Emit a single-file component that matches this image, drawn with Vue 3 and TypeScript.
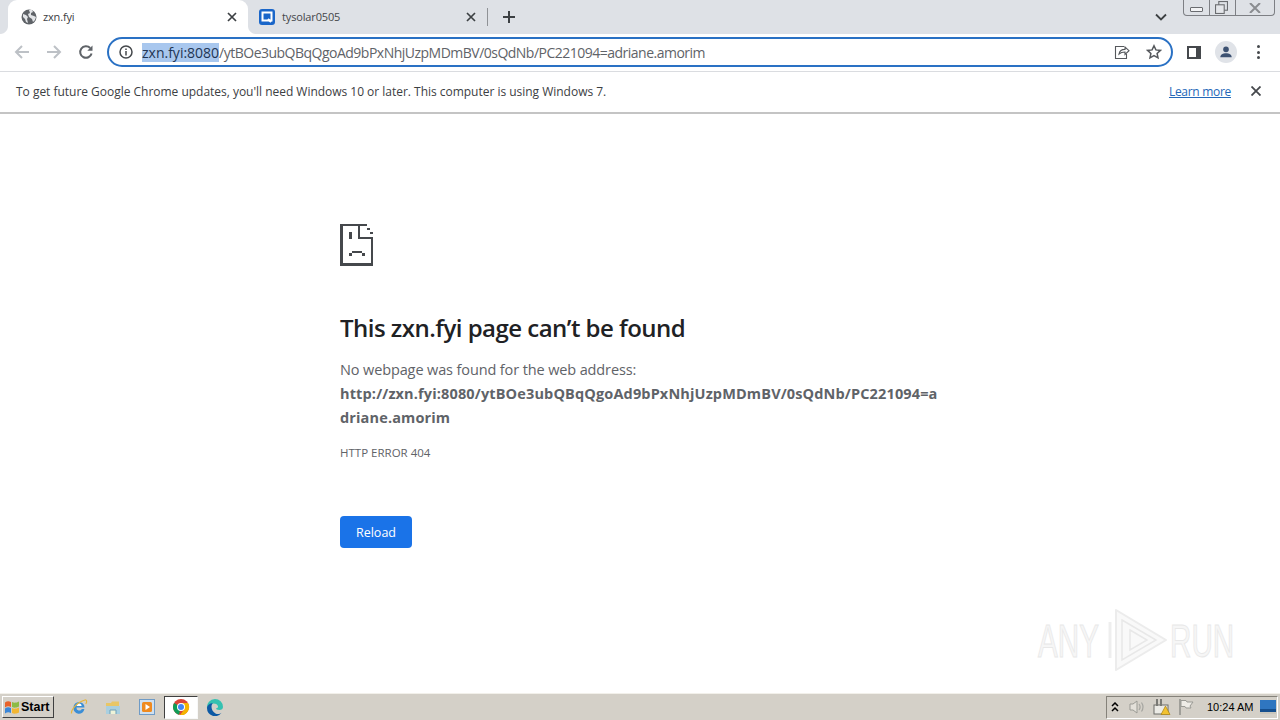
<script setup lang="ts">
/* Chrome-Fenster mit 404-Fehlerseite auf Windows-7-Classic-Taskleiste */
const urlHost = 'zxn.fyi:8080'
const urlRest = '/ytBOe3ubQBqQgoAd9bPxNhjUzpMDmBV/0sQdNb/PC221094=adriane.amorim'
</script>

<template>
  <div class="window">
    <!-- Tabs -->
    <header class="tabstrip">
      <div class="tab tab--active">
        <svg class="favicon" viewBox="0 0 16 16">
          <circle cx="8" cy="8" r="7.5" fill="#5f6368" />
          <path d="M2 5l3 1 2 2-1 2 1 4-2-1-1-3-2-2zM8 1l3 0 1 2-2 1 0 2 3 1 2 1-1 3-2 2-1-3-3-2-1-3 2-1z" fill="#e3e5e8" />
        </svg>
        <span class="tab__title">zxn.fyi</span>
        <svg class="tab__close" viewBox="0 0 10 10"><path d="M1 1l8 8M9 1l-8 8" /></svg>
      </div>
      <div class="tab">
        <svg class="favicon" viewBox="0 0 16 16">
          <rect width="16" height="16" rx="3" fill="#1a66c9" />
          <rect x="3.5" y="3.5" width="9" height="8" fill="none" stroke="#fff" stroke-width="2" />
          <path d="M9 10l3 3" stroke="#fff" stroke-width="2" />
        </svg>
        <span class="tab__title">tysolar0505</span>
        <svg class="tab__close" viewBox="0 0 10 10"><path d="M1 1l8 8M9 1l-8 8" /></svg>
      </div>
      <span class="tab-sep"></span>
      <svg class="new-tab" viewBox="0 0 12 12"><path d="M6 0v12M0 6h12" /></svg>
      <svg class="tab-search" viewBox="0 0 12 8"><path d="M1 1.5l5 5 5-5" /></svg>
      <div class="win-controls">
        <span class="win-btn win-btn--min"><i></i></span>
        <span class="win-btn win-btn--max">
          <svg viewBox="0 0 12 12"><rect x="3.5" y="0.5" width="8" height="8" /><rect x="0.5" y="3.5" width="8" height="8" fill="#e4e6ea" /></svg>
        </span>
        <span class="win-btn win-btn--close">
          <svg viewBox="0 0 12 10"><path d="M1 0l10 10M11 0L1 10" /></svg>
        </span>
      </div>
    </header>

    <!-- Adressleiste -->
    <nav class="toolbar">
      <svg class="nav-icon nav-icon--off" viewBox="0 0 16 16"><path d="M15 8H2M8 2L2 8l6 6" /></svg>
      <svg class="nav-icon nav-icon--off" viewBox="0 0 16 16"><path d="M1 8h13M8 2l6 6-6 6" /></svg>
      <svg class="nav-icon" viewBox="0 0 16 16">
        <path d="M13.6 9.5A5.8 5.8 0 1 1 12.2 4" />
        <path class="fill" d="M14.5 1.5v5.2H9.3z" />
      </svg>
      <div class="omnibox">
        <svg class="info" viewBox="0 0 14 14">
          <circle cx="7" cy="7" r="6" />
          <path d="M7 6v4.4M7 3.4v1.5" />
        </svg>
        <span class="url"><span class="url__sel">{{ urlHost }}</span><span class="url__rest">{{ urlRest }}</span></span>
        <svg class="omni-icon omni-icon--share" viewBox="0 0 16 16">
          <path d="M10 2.5H1.5V14.5h11V10" />
          <path d="M5 10c.6-3 2.9-4.6 6-4.6V3l4 3.7-4 3.7V8C8.6 8 6.5 8.6 5 10z" fill="#fff" />
        </svg>
        <svg class="omni-icon" viewBox="0 0 16 16">
          <path d="M8 1.8l1.9 4.1 4.5.5-3.3 3 .9 4.4L8 11.6l-4 2.200.9-4.400-3.300-3 4.500-.5z" />
        </svg>
      </div>
      <span class="side-panel"><i></i></span>
      <span class="avatar">
        <svg viewBox="0 0 16 16"><circle cx="8" cy="5" r="3.2" /><path d="M1.5 14c0-3 3-4.5 6.500-4.500s6.500 1.500 6.500 4.500z" /></svg>
      </span>
      <span class="menu-dots"><i></i><i></i><i></i></span>
    </nav>

    <!-- Hinweisleiste -->
    <section class="infobar">
      <span class="infobar__text">To get future Google Chrome updates, you'll need Windows 10 or later. This computer is using Windows 7.</span>
      <a class="infobar__link">Learn more</a>
      <svg class="infobar__close" viewBox="0 0 10 10"><path d="M0.5 0.5l9 9M9.5 0.5l-9 9" /></svg>
    </section>

    <!-- Fehlerseite -->
    <main class="page">
      <div class="error">
        <svg class="error__icon" viewBox="0 0 33 42" shape-rendering="crispEdges">
          <path d="M0 0h27v2H3v37h28V13h2v29H0z" />
          <path d="M18 2h2v11h13v2H18zM27 4h3v2h-3zM30 8h3v2h-3z" />
          <path d="M9 8h3v7H9zM12 27h10v2H12zM9 29h3v3H9zM22 29h3v3h-3z" />
        </svg>
        <h1>This zxn.fyi page can’t be found</h1>
        <p class="error__lead">No webpage was found for the web address:</p>
        <p class="error__url">http://zxn.fyi:8080/ytBOe3ubQBqQgoAd9bPxNhjUzpMDmBV/0sQdNb/PC221094=adriane.amorim</p>
        <p class="error__code">HTTP ERROR 404</p>
        <button class="reload" type="button">Reload</button>
      </div>

      <!-- Wasserzeichen -->
      <div class="watermark">
        <span class="watermark__word"><span>ANY</span></span>
        <svg viewBox="0 0 60 64">
          <path d="M8 2L58 32 8 62z" fill="#f9f9f9" stroke="#ececec" stroke-width="2" stroke-linejoin="round" />
          <path d="M14 12l34 20-34 20zM22 22l17 10-17 10z" fill="none" stroke="#e8e8e8" stroke-width="1.5" />
          <path d="M2 14v36" stroke="#eeeeee" stroke-width="3" />
        </svg>
        <span class="watermark__word"><span>RUN</span></span>
      </div>
    </main>

    <!-- Taskleiste -->
    <footer class="taskbar">
      <button class="start" type="button">
        <svg viewBox="0 0 16 16">
          <path d="M1 3.500c2-1.500 4-1.500 6-.5v5C5 7 3 7 1 8.500z" fill="#e8622a" />
          <path d="M8 3c2 1 4 1 7-.5v5C12 9 10 9 8 8z" fill="#8dbb45" />
          <path d="M1 9.500c2-1.500 4-1.500 6-.5v5c-2-1-4-1-6 .5z" fill="#3a86d8" />
          <path d="M8 9c2 1 4 1 7-.5v5c-3 1.500-5 1.500-7 .5z" fill="#f2b632" />
        </svg>
        Start
      </button>
      <div class="quick">
        <span class="quick__item">
          <svg viewBox="0 0 18 18">
            <path d="M3.500 9.500a5.500 5.500 0 0 1 11 0H6.500a2.800 2.800 0 0 0 5.300 1.500h2.600a5.500 5.500 0 0 1-10.900-1.500z" fill="#3b8ed6" />
            <path d="M6.600 8h5a2.500 2.500 0 0 0-5 0z" fill="#fff" />
            <path d="M1.500 15.500C1 12 7 4 15 2c2-.5 2 2 .8 4" fill="none" stroke="#e6b53c" stroke-width="1.2" />
          </svg>
        </span>
        <span class="quick__item">
          <svg viewBox="0 0 18 18">
            <path d="M2 5h5l1-1.500h7V15H2z" fill="#e8c667" />
            <path d="M2 8h14v8H2z" fill="#a9cfe0" />
            <path d="M6 16v-4h6v4" fill="#eef3d8" stroke="#6ea0b8" />
          </svg>
        </span>
        <span class="quick__item">
          <svg viewBox="0 0 18 18">
            <rect x="1.5" y="1.5" width="15" height="15" fill="#cfe0f0" stroke="#6f9bc6" />
            <rect x="4" y="4" width="10" height="10" rx="1.5" fill="#ef8a1f" />
            <path d="M7.500 6v6l4.500-3z" fill="#fff" />
          </svg>
        </span>
        <span class="quick__item quick__item--active">
          <svg viewBox="0 0 18 18">
            <circle cx="9" cy="9" r="8" fill="#db4437" />
            <path d="M9 9L2.100 5A8 8 0 0 0 7 16.800z" fill="#0f9d58" />
            <path d="M9 5h7a8 8 0 0 1-7.900 12L12.500 11z" fill="#f4b400" />
            <circle cx="9" cy="9" r="4" fill="#fff" />
            <circle cx="9" cy="9" r="3" fill="#4285f4" />
          </svg>
        </span>
        <span class="quick__item">
          <svg viewBox="0 0 18 18">
            <path d="M9 1a8 8 0 0 1 8 8c0 2-1.500 3-3.500 3-2.500 0-3.500-.8-3.500-1.700 1.700-.2 2.500-1.200 1.800-2.600C10.800 5.700 8 4.800 5 6 3 7 1.500 8.500 1 10a8 8 0 0 1 8-9z" fill="#35c1b1" />
            <path d="M1 10c.2-3 3.500-5 6-4.700C4.500 7 5 13 9.500 15.500c2 1 4.500.6 6-.8A8 8 0 0 1 1 10z" fill="#0c59a4" />
          </svg>
        </span>
      </div>
      <div class="tray">
        <svg class="tray__icon tray__icon--chev" viewBox="0 0 8 10"><path d="M1 4l3-3 3 3M1 9l3-3 3 3" /></svg>
        <svg class="tray__icon tray__icon--speaker" viewBox="0 0 18 16">
          <path d="M2 5h3l4-3v12l-4-3H2z" fill="#e4e1da" stroke="#9b9b95" />
          <path d="M11 5c1.500 2 1.500 4 0 6M13.500 3.500c2 3 2 6 0 9" fill="none" stroke="#a5a5a0" stroke-width="1.2" />
        </svg>
        <svg class="tray__icon tray__icon--net" viewBox="0 0 18 18">
          <rect x="1" y="7" width="14" height="9" fill="#ecebe6" stroke="#6d6d68" />
          <path d="M4 1v7M8 1v7" stroke="#7a7a75" stroke-width="2" />
          <path d="M12.500 8l4.500 8.500H8z" fill="#f2c230" stroke="#a77f10" stroke-width=".7" />
        </svg>
        <svg class="tray__icon tray__icon--flag" viewBox="0 0 18 18">
          <path d="M3 1v16" stroke="#8f8f8a" stroke-width="1.5" />
          <path d="M4 2.500h5l1 1.500h6l-3 4 1 2H9L8 8.500H4z" fill="#eeece6" stroke="#9a9a94" />
        </svg>
        <span class="tray__clock">10:24 AM</span>
        <svg class="tray__icon tray__icon--desk" viewBox="0 0 16 14">
          <rect width="16" height="12" fill="#2f76c0" />
          <rect y="9" width="16" height="3" fill="#164f8e" />
          <rect y="12" width="16" height="2" fill="#c9c6bd" />
        </svg>
      </div>
    </footer>
  </div>
</template>

<style>
html,
body {
  margin: 0;
  background: #fff;
}
</style>

<style scoped>
.window {
  width: 1280px;
  height: 720px;
  display: flex;
  flex-direction: column;
  overflow: hidden;
  font-family: "Open Sans", "Noto Sans", sans-serif;
  color: #202124;
}

/* ---------- Tabs ---------- */
.tabstrip {
  height: 34px;
  flex: none;
  display: flex;
  align-items: flex-end;
  padding-left: 8px;
  background: #dee1e6;
}
.tab {
  width: 239px;
  height: 28px;
  padding: 0 11px 6px 11px;
  box-sizing: border-box;
  display: flex;
  align-items: center;
  font-size: 11px;
  letter-spacing: -0.15px;
  color: #45474a;
}
.tab--active {
  position: relative;
  width: 240px;
  height: 34px;
  padding: 0 11px 0 13px;
  background: #fff;
  border-radius: 9px 9px 0 0;
  color: #3c4043;
}
/* ausgestellte Ecken unten am aktiven Tab */
.tab--active::before,
.tab--active::after {
  content: "";
  position: absolute;
  bottom: 0;
  width: 8px;
  height: 8px;
}
.tab--active::before {
  left: -8px;
  background: radial-gradient(circle at 0 0, #dee1e6 7.5px, #fff 8.5px);
}
.tab--active::after {
  right: -8px;
  background: radial-gradient(circle at 100% 0, #dee1e6 7.5px, #fff 8.5px);
}
.favicon {
  width: 16px;
  height: 16px;
  flex: none;
  margin-right: 7px;
}
.tab--active .favicon {
  margin-right: 6px;
}
.tab__title {
  flex: 1;
  margin-top: -1px;
}
.tab__close {
  width: 10px;
  height: 10px;
  flex: none;
  fill: none;
  stroke: #3c4043;
  stroke-width: 1.7;
}
.tab-sep {
  width: 1px;
  height: 18px;
  margin-bottom: 8px;
  background: #8f9296;
}
.new-tab {
  width: 12px;
  height: 12px;
  margin: 0 0 11px 15px;
  fill: none;
  stroke: #3c4043;
  stroke-width: 2;
}
.tab-search {
  width: 12px;
  height: 8px;
  margin: 0 0 13px auto;
  fill: none;
  stroke: #3c4043;
  stroke-width: 1.8;
}
.win-controls {
  align-self: flex-start;
  display: flex;
  width: 92px;
  height: 16px;
  margin: 0 5px 0 16px;
  box-sizing: border-box;
  border: 1px solid #7d7f84;
  border-top: none;
  border-radius: 0 0 4px 4px;
}
.win-btn {
  display: flex;
  align-items: center;
  justify-content: center;
  flex: none;
  width: 25px;
  border-right: 1px solid #7d7f84;
}
.win-btn--close {
  flex: 1;
  border-right: none;
}
.win-btn--min i {
  width: 11px;
  height: 3px;
  margin-top: 4px;
  border: 1px solid #6a6c70;
  border-radius: 1px;
  background: #f2f3f5;
}
.win-btn svg {
  width: 12px;
  height: 12px;
  fill: none;
  stroke: #6a6c70;
}
.win-btn--max svg {
  width: 13px;
  height: 13px;
  margin-left: -2px;
}
.win-btn--close svg {
  height: 10px;
  stroke-width: 2;
  stroke: #8a8c90;
}

/* ---------- Adressleiste ---------- */
.toolbar {
  height: 38px;
  flex: none;
  box-sizing: border-box;
  display: flex;
  align-items: center;
  padding: 0 12px 1px 14px;
  background: #fff;
  border-bottom: 1px solid #dadce0;
}
.nav-icon {
  width: 16px;
  height: 16px;
  flex: none;
  margin-right: 16px;
  fill: none;
  stroke: #5f6368;
  stroke-width: 2;
}
.nav-icon--off {
  stroke: #bdc1c6;
}
.nav-icon .fill {
  fill: #5f6368;
  stroke: none;
}
.omnibox {
  width: 1066px;
  height: 30px;
  flex: none;
  margin-left: -3px;
  box-sizing: border-box;
  display: flex;
  align-items: center;
  padding: 0 9px 0 10px;
  border: 2px solid #2a71c4;
  border-radius: 15px;
}
.info {
  width: 14px;
  height: 14px;
  flex: none;
  fill: none;
  stroke: #45484c;
  stroke-width: 1.5;
}
.url {
  flex: 1;
  margin-left: 9px;
  font-size: 14px;
  line-height: 19px;
  white-space: nowrap;
  color: #5f6368;
}
.url__sel {
  letter-spacing: 0;
  background: #a8c7ee;
  color: #1f3554;
}
.url__rest {
  letter-spacing: -0.51px;
}
.omni-icon {
  width: 16px;
  height: 16px;
  flex: none;
  margin-left: 16px;
  fill: none;
  stroke: #55585c;
  stroke-width: 1.5;
}
.omni-icon--share {
  stroke-width: 1.1;
}
.side-panel {
  width: 14px;
  height: 13px;
  flex: none;
  margin-left: 14px;
  box-sizing: border-box;
  display: flex;
  justify-content: flex-start;
  border: 2px solid #45484c;
  background: #45484c;
}
.side-panel i {
  width: 7px;
  background: #fff;
}
.avatar {
  width: 22px;
  height: 22px;
  flex: none;
  margin-left: 14px;
  display: flex;
  align-items: center;
  justify-content: center;
  border-radius: 50%;
  background: #e0e3e8;
}
.avatar svg {
  width: 14px;
  height: 14px;
  fill: #3d5272;
}
.menu-dots {
  flex: none;
  margin-left: 20px;
  display: flex;
  flex-direction: column;
  gap: 2.5px;
}
.menu-dots i {
  width: 3px;
  height: 3px;
  border-radius: 50%;
  background: #45484c;
}

/* ---------- Hinweisleiste ---------- */
.infobar {
  height: 42px;
  flex: none;
  box-sizing: border-box;
  display: flex;
  align-items: center;
  padding: 0 19px 2px 16px;
  font-size: 12px;
  letter-spacing: -0.02px;
  color: #3c4043;
  background: #fff;
  border-bottom: 2px solid #c4c4c4;
}
.infobar__text {
  flex: 1;
}
.infobar__link {
  letter-spacing: -0.3px;
  color: #2467b8;
  text-decoration: underline;
}
.infobar__close {
  width: 10px;
  height: 10px;
  margin-left: 20px;
  fill: none;
  stroke: #45484c;
  stroke-width: 1.8;
}

/* ---------- Fehlerseite ---------- */
.page {
  flex: 1;
  position: relative;
  padding: 110px 0 0 340px;
  background: #fff;
}
.error {
  width: 600px;
}
.error__icon {
  display: block;
  width: 33px;
  height: 42px;
  fill: #45484c;
}
h1 {
  margin: 46px 0 0;
  font-size: 24px;
  font-weight: 600;
  line-height: 32px;
  letter-spacing: -0.52px;
  color: #202124;
}
.error__lead,
.error__url {
  margin: 0;
  font-size: 14.5px;
  line-height: 24px;
  color: #5f6368;
}
.error__lead {
  margin-top: 14px;
  letter-spacing: -0.12px;
}
.error__url {
  font-weight: 700;
  letter-spacing: 0.14px;
  word-break: break-all;
}
.error__code {
  margin: 15px 0 0;
  font-size: 11.5px;
  line-height: 16px;
  color: #5f6368;
}
.reload {
  display: block;
  width: 72px;
  height: 32px;
  margin-top: 55px;
  padding: 0;
  border: none;
  border-radius: 4px;
  font-family: inherit;
  font-size: 12.5px;
  color: #fff;
  background: #1a73e8;
}
.watermark {
  position: absolute;
  left: 1038px;
  top: 494px;
  display: flex;
  align-items: center;
  gap: 8px;
  font-family: "Liberation Sans", sans-serif;
  font-size: 47px;
  line-height: 1;
  color: #f6f6f6;
  -webkit-text-stroke: 1px #e8e8e8;
}
/* schmale Schrift: gestauchter Text in fester Breite */
.watermark__word {
  width: 62px;
  flex: none;
}
.watermark__word span {
  display: block;
  width: 100px;
  transform: scaleX(0.63);
  transform-origin: left center;
}
.watermark svg {
  width: 60px;
  height: 64px;
  flex: none;
  margin: 0 -6px 0 0;
}

/* ---------- Taskleiste ---------- */
.taskbar {
  height: 27px;
  flex: none;
  box-sizing: border-box;
  display: flex;
  align-items: center;
  padding: 0 2px;
  background: #d4d0c8;
  border-top: 1px solid #f2f0ea;
  box-shadow: 0 -1px 0 #d8d6cf;
}
.start {
  width: 52px;
  height: 22px;
  flex: none;
  box-sizing: border-box;
  display: flex;
  align-items: center;
  gap: 1px;
  padding: 0 0 0 1px;
  border: 1px solid;
  border-color: #fff #404040 #404040 #fff;
  background: #d4d0c8;
  font-family: "Liberation Sans", sans-serif;
  font-size: 12.5px;
  font-weight: 700;
  color: #000;
}
.start svg {
  width: 16px;
  height: 16px;
}
.quick {
  display: flex;
  align-items: center;
  margin-left: 8px;
}
.quick__item {
  width: 34px;
  height: 23px;
  flex: none;
  box-sizing: border-box;
  display: flex;
  align-items: center;
  justify-content: center;
}
.quick__item svg {
  width: 18px;
  height: 18px;
}
.quick__item--active {
  background: #fff;
  border: 1px solid;
  border-color: #404040 #f8f8f8 #f8f8f8 #404040;
}
.tray {
  height: 23px;
  margin-left: auto;
  width: 172px;
  box-sizing: border-box;
  display: flex;
  align-items: center;
  padding-left: 4px;
  border: 1px solid;
  border-color: #85827a #fff #fff #85827a;
}
.tray__icon {
  flex: none;
}
.tray__icon--chev {
  width: 8px;
  height: 10px;
  fill: none;
  stroke: #000;
  stroke-width: 1.5;
}
.tray__icon--speaker {
  width: 18px;
  height: 16px;
  margin-left: 9px;
}
.tray__icon--net {
  width: 18px;
  height: 18px;
  margin-left: 7px;
}
.tray__icon--flag {
  width: 18px;
  height: 18px;
  margin-left: 6px;
}
.tray__clock {
  margin-left: 12px;
  font-family: "Liberation Sans", sans-serif;
  font-size: 11px;
  white-space: nowrap;
  color: #000;
}
.tray__icon--desk {
  width: 16px;
  height: 14px;
  margin-left: 7px;
}
</style>
